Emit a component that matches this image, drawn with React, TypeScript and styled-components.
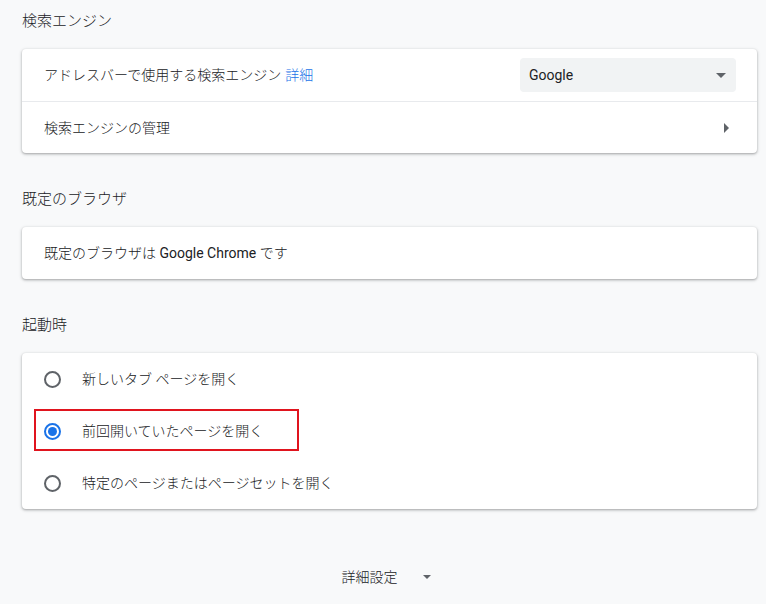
import React from 'react';
import styled, { createGlobalStyle } from 'styled-components';

const GlobalStyle = createGlobalStyle`
  html, body {
    margin: 0;
    padding: 0;
    background: #f8f9fa;
  }
  body {
    font-family: Roboto, "Noto Sans CJK JP", sans-serif;
    font-weight: 300;
    color: #202124;
    font-size: 14px;
  }
`;

const Page = styled.div`
  padding: 0 9px 40px 22px;
`;

const Section = styled.section`
  display: flex;
  flex-direction: column;
`;

const SectionTitle = styled.h2`
  margin: 0 0 17px 0;
  padding-top: 35px;
  font-size: 15px;
  font-weight: 300;
  line-height: 22px;
  color: #202124;

  ${Section}:first-child & {
    padding-top: 10px;
  }
`;

const Card = styled.div`
  background: #fff;
  border-radius: 4px;
  box-shadow: 0 1px 2px 0 rgba(60, 64, 67, 0.3), 0 1px 3px 1px rgba(60, 64, 67, 0.15);
  display: flex;
  flex-direction: column;
`;

const Row = styled.div<{ $divider?: boolean; $height?: number }>`
  position: relative;
  display: flex;
  align-items: center;
  min-height: ${(p) => p.$height ?? 52}px;
  padding: 0 21px 0 22px;
  border-top: ${(p) => (p.$divider ? '1px solid #e8eaed' : 'none')};
  line-height: 20px;
`;

const Label = styled.div`
  flex: 1;
`;

// latin words render in regular weight, like the original
const Latin = styled.span`
  font-weight: 400;
`;

const Link = styled.a`
  color: #1a73e8;
  text-decoration: none;
  margin-left: 4px;
`;

const Select = styled.div`
  width: 216px;
  height: 34px;
  box-sizing: border-box;
  background: #f1f3f4;
  border-radius: 4px;
  display: flex;
  align-items: center;
  padding: 0 9px 0 9px;
  font-size: 14px;
  font-weight: 400;
  color: #202124;
`;

const SelectValue = styled.span`
  flex: 1;
`;

const DownArrow = styled.span<{ $size?: number }>`
  width: 0;
  height: 0;
  border-left: ${(p) => p.$size ?? 5}px solid transparent;
  border-right: ${(p) => p.$size ?? 5}px solid transparent;
  border-top: ${(p) => p.$size ?? 5}px solid #5f6368;
  margin-right: 1px;
`;

const RightArrow = styled.span`
  width: 0;
  height: 0;
  border-top: 5px solid transparent;
  border-bottom: 5px solid transparent;
  border-left: 5px solid #5f6368;
  margin-right: 7px;
`;

const RadioCircle = styled.span<{ $checked?: boolean }>`
  width: 17px;
  height: 17px;
  box-sizing: border-box;
  border-radius: 50%;
  border: 2px solid ${(p) => (p.$checked ? '#1a73e8' : '#5f6368')};
  display: flex;
  align-items: center;
  justify-content: center;
  margin-right: 21px;
  flex-shrink: 0;

  &::after {
    content: '';
    display: ${(p) => (p.$checked ? 'block' : 'none')};
    width: 9px;
    height: 9px;
    border-radius: 50%;
    background: #1a73e8;
  }
`;

const Highlight = styled.div`
  position: absolute;
  left: 12px;
  top: 4px;
  width: 265px;
  height: 42px;
  box-sizing: border-box;
  border: 2px solid #e0141e;
  pointer-events: none;
`;

const Advanced = styled.div`
  display: flex;
  justify-content: center;
  align-items: center;
  gap: 25px;
  margin-top: 58px;
  line-height: 20px;
  color: #202124;
  padding-right: 6px;
`;

const startupOptions = [
  { label: '新しいタブ ページを開く', checked: false },
  { label: '前回開いていたページを開く', checked: true },
  { label: '特定のページまたはページセットを開く', checked: false },
];

export default function App() {
  return (
    <>
      <GlobalStyle />
      <Page>
        <Section>
          <SectionTitle>検索エンジン</SectionTitle>
          <Card>
            <Row>
              <Label>
                アドレスバーで使用する検索エンジン<Link href="#">詳細</Link>
              </Label>
              <Select>
                <SelectValue>Google</SelectValue>
                <DownArrow />
              </Select>
            </Row>
            <Row $divider $height={51}>
              <Label>検索エンジンの管理</Label>
              <RightArrow />
            </Row>
          </Card>
        </Section>

        <Section>
          <SectionTitle>既定のブラウザ</SectionTitle>
          <Card>
            <Row>
              <Label>
                既定のブラウザは <Latin>Google Chrome</Latin> です
              </Label>
            </Row>
          </Card>
        </Section>

        <Section>
          <SectionTitle>起動時</SectionTitle>
          <Card>
            {startupOptions.map((o) => (
              <Row key={o.label}>
                <RadioCircle $checked={o.checked} />
                <Label>{o.label}</Label>
                {o.checked && <Highlight />}
              </Row>
            ))}
          </Card>
        </Section>

        <Advanced>
          <span>詳細設定</span>
          <DownArrow $size={4} />
        </Advanced>
      </Page>
    </>
  );
}
